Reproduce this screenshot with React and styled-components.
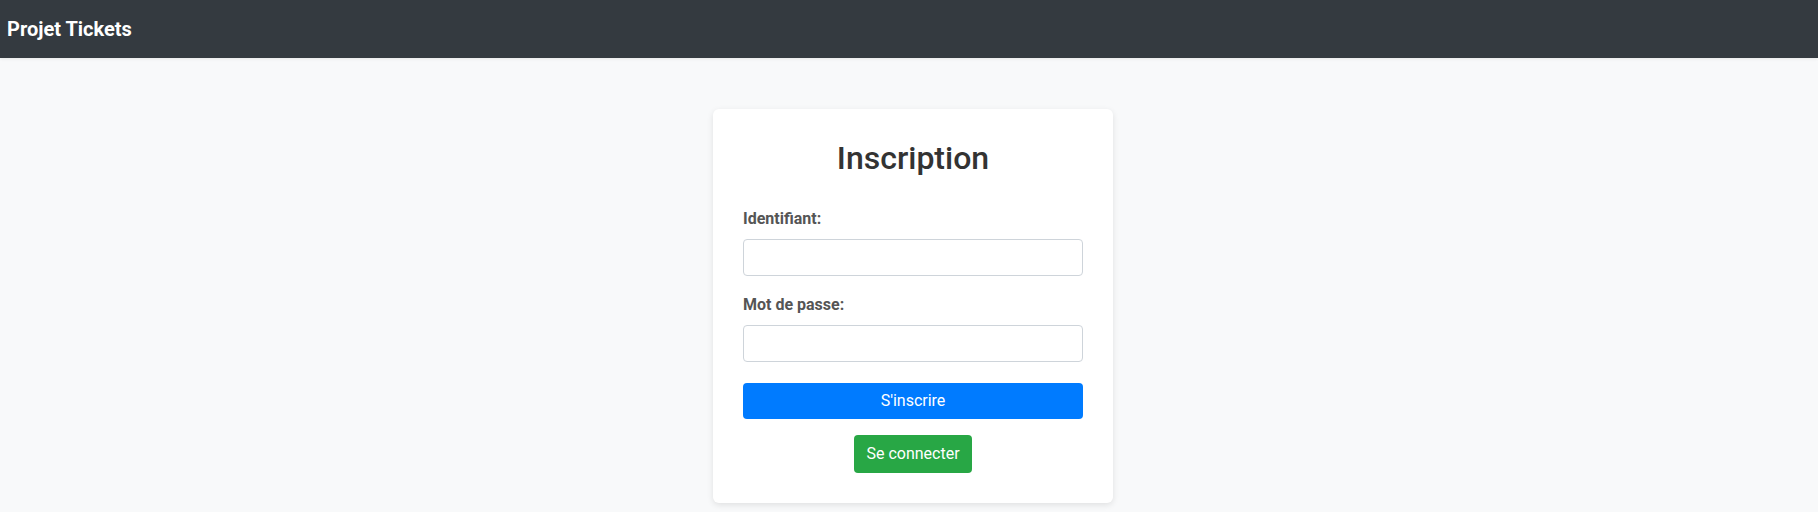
import React from "react";
import styled, { createGlobalStyle } from "styled-components";

const GlobalStyle = createGlobalStyle`
  html, body {
    margin: 0;
    padding: 0;
    background: #f8f9fa;
    font-family: Roboto, "Liberation Sans", Arial, sans-serif;
  }
  * { box-sizing: border-box; }
`;

const Page = styled.div`
  min-height: 512px;
  background: #f8f9fa;
`;

const NavBar = styled.header`
  height: 58px;
  background: #343a40;
  display: flex;
  align-items: center;
  padding: 0 7px;
  box-shadow: 0 1px 3px rgba(0, 0, 0, 0.08);
`;

const Brand = styled.a`
  color: #ffffff;
  font-size: 20px;
  font-weight: 700;
  text-decoration: none;
  line-height: 24px;
  margin-top: 0px;
`;

const Main = styled.main`
  display: flex;
  justify-content: center;
  padding: 51px 0 0 8px;
`;

const Card = styled.div`
  width: 400px;
  background: #ffffff;
  border-radius: 6px;
  box-shadow: 0 2px 6px rgba(0, 0, 0, 0.1);
  padding: 30px;
`;

const Title = styled.h2`
  margin: 0 0 32px;
  text-align: center;
  font-size: 32px;
  font-weight: 500;
  line-height: 38px;
  color: #333333;
`;

const Field = styled.div`
  margin-bottom: 19px;
`;

const Label = styled.label`
  display: block;
  font-size: 16px;
  font-weight: 700;
  line-height: 19px;
  color: #555555;
  margin-bottom: 11px;
`;

const Input = styled.input`
  display: block;
  width: 100%;
  height: 37px;
  padding: 6px 12px;
  font-size: 16px;
  font-family: inherit;
  border: 1px solid #ced4da;
  border-radius: 4px;
  background: #ffffff;
  outline: none;
`;

const Button = styled.button`
  display: ${(p) => (p.$block ? "block" : "inline-block")};
  width: ${(p) => (p.$block ? "100%" : "auto")};
  background: ${(p) => p.$bg};
  color: #ffffff;
  border: none;
  border-radius: 4px;
  font-family: inherit;
  font-size: 16px;
  line-height: 20px;
  padding: ${(p) => (p.$block ? "8px 12px" : "9px 12px")};
  cursor: pointer;
`;

const Actions = styled.div`
  display: flex;
  flex-direction: column;
  align-items: center;
  gap: 16px;
  margin-top: 21px;
`;

export default function App() {
  return (
    <Page>
      <GlobalStyle />
      <NavBar>
        <Brand href="#">Projet Tickets</Brand>
      </NavBar>
      <Main>
        <Card>
          <Title>Inscription</Title>
          <form onSubmit={(e) => e.preventDefault()}>
            <Field>
              <Label htmlFor="identifiant">Identifiant:</Label>
              <Input id="identifiant" type="text" />
            </Field>
            <Field style={{ marginBottom: 0 }}>
              <Label htmlFor="password">Mot de passe:</Label>
              <Input id="password" type="password" />
            </Field>
            <Actions>
              <Button type="submit" $block $bg="#007bff">S'inscrire</Button>
              <Button type="button" $bg="#28a745">Se connecter</Button>
            </Actions>
          </form>
        </Card>
      </Main>
    </Page>
  );
}
